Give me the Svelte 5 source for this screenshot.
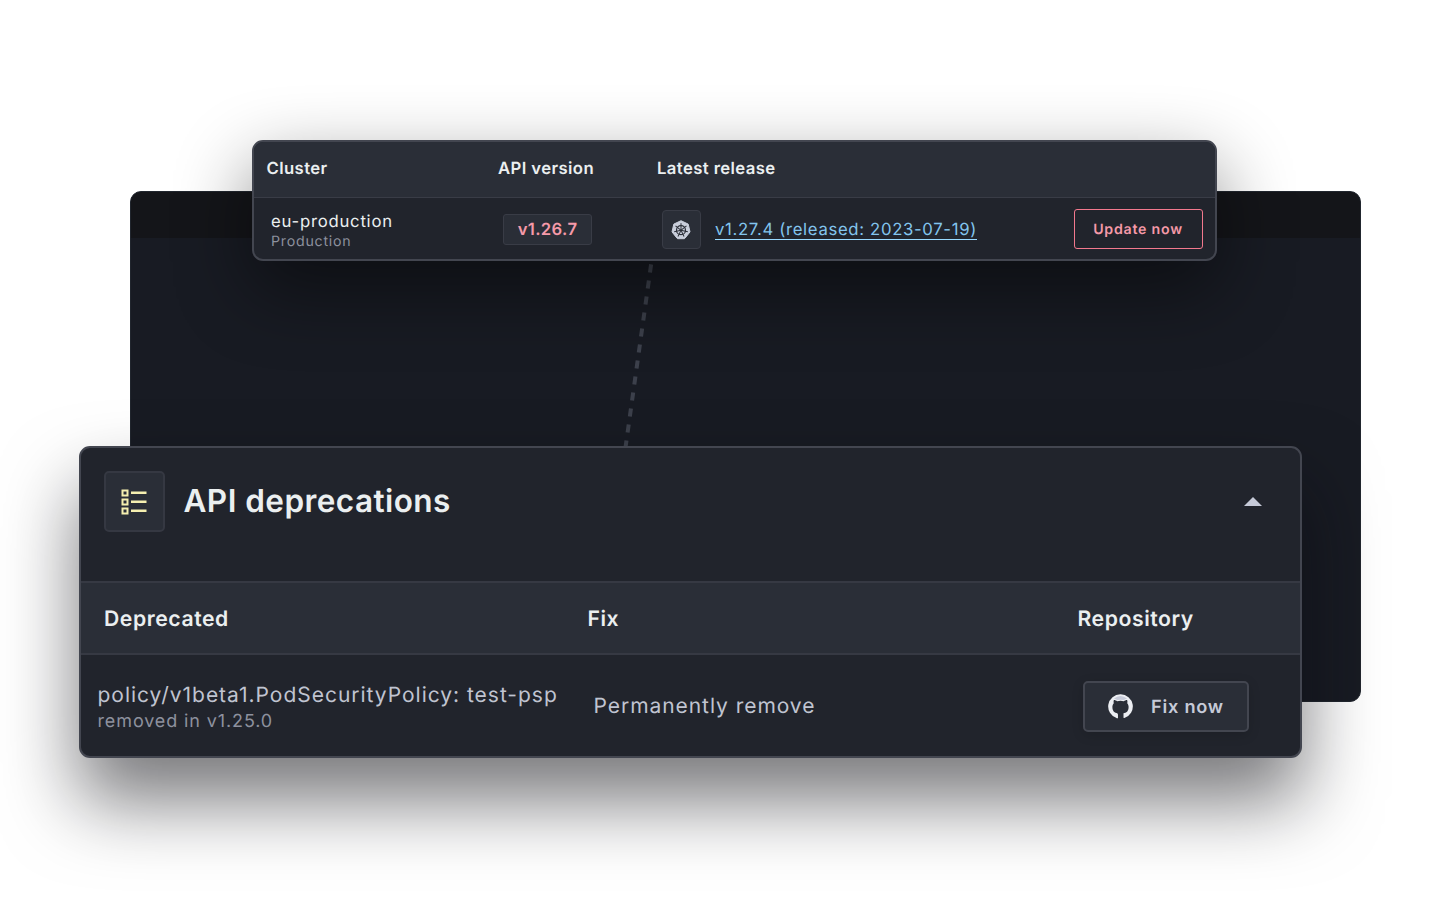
<script>
  const spokes = Array.from({ length: 7 }, (_, i) => (i * 360) / 7);
</script>

<main class="stage">
  <section class="backdrop"><div class="backdrop-bar"></div></section>

  <section class="panel release">
    <header class="release-head">
      <span class="c1">Cluster</span>
      <span class="c2">API version</span>
      <span class="c3">Latest release</span>
    </header>
    <div class="release-row">
      <div class="cluster">
        <span class="name">eu-production</span>
        <span class="env">Production</span>
      </div>
      <div class="version"><span>v1.26.7</span></div>
      <div class="k8s">
        <svg width="20" height="20" viewBox="0 0 20 20" aria-hidden="true">
          <path d="M10 .7 17.2 4.1 19 11.9 14 18.2Q13.600 18.700 13 18.700H7Q6.400 18.700 6 18.200L1 11.900 2.800 4.100Z" fill="#c9cedb" stroke="#c9cedb" stroke-linejoin="round" />
          <g fill="none" stroke="#2a2e37">
            <circle cx="10" cy="10.200" r="4.500" stroke-width="1.200" />
            {#each spokes as angle}
              <path d="M10 9.200V3.200" stroke-width="1" transform="rotate({angle} 10 10.200)" />
            {/each}
          </g>
          <circle cx="10" cy="10.200" r="1.200" fill="#2a2e37" />
        </svg>
      </div>
      <span class="link">v1.27.4 (released: 2023-07-19)</span>
      <button class="update"><span>Update now</span></button>
    </div>
  </section>

  <svg class="connector" width="60" height="200" viewBox="0 0 60 200" aria-hidden="true">
    <defs>
      <linearGradient id="fade" gradientUnits="userSpaceOnUse" x1="0" y1="0" x2="0" y2="90">
        <stop offset="0" stop-color="#282b32" />
        <stop offset="1" stop-color="#3c404b" />
      </linearGradient>
    </defs>
    <path d="M40.100 4.400 L14 191" fill="none" stroke="url(#fade)" stroke-width="4" stroke-dasharray="8.1 8.06" />
  </svg>

  <section class="panel deprecations">
    <header class="title-row">
      <div class="list-icon">
        <svg width="26" height="26" viewBox="0 0 26 26" fill="none" stroke="#f5efb0" stroke-width="2" aria-hidden="true">
          <path d="M1.500 1.500h5v5h-5zM1.500 10.500h5v5h-5zM1.500 19.500h5v5h-5z" />
          <path d="M10 3.700H25.500M10 12.700H25.500M10 21.700H25.500" stroke-width="2.400" />
        </svg>
      </div>
      <h1>API deprecations</h1>
      <svg class="caret" width="18" height="9" viewBox="0 0 18 9" aria-hidden="true"><path d="M0 9 9 0l9 9z" fill="#c6cad8" /></svg>
    </header>
    <div class="columns">
      <span class="d1">Deprecated</span>
      <span class="d2">Fix</span>
      <span class="d3">Repository</span>
    </div>
    <div class="dep-row">
      <div class="policy">
        <span class="resource">policy/v1beta1.PodSecurityPolicy: test-psp</span>
        <span class="removed">removed in v1.25.0</span>
      </div>
      <span class="remedy">Permanently remove</span>
      <button class="fix">
        <svg width="25" height="25" viewBox="0 0 25 25" aria-hidden="true">
          <path d="M9.300 24.300V20.800C6.300 21.300 5.500 19.600 4.700 18.500 4.200 17.800 3.500 17.600 3.100 17.200" fill="none" stroke="#eceef2" stroke-width="1.300" />
          <path fill="#eceef2" d="M12.500 .3A12.200 12.200 0 0 0 8.600 24.100q.9.100.9-.7V19.200C6.700 18.900 4.400 17.600 4.400 13.100 4.400 11.400 4.900 10.300 5.800 9.300 5.500 8.300 5.500 7 5.900 5.900 7.100 5.900 8.300 6.600 9.300 7.200Q12.500 6.500 15.700 7.200C16.700 6.600 17.900 5.900 19.100 5.900 19.500 7 19.500 8.300 19.200 9.300 20.100 10.300 20.600 11.400 20.600 13.100 20.600 17.600 18.300 18.900 15.500 19.200V23.400q0 .8.900.7A12.200 12.200 0 0 0 12.500.3Z" />
          <path d="M6 4.600Q12.500-.5 19 4.600L15.700 6Q12.500 5.300 9.300 6Z" fill="#c6cad8" />
        </svg>
        <span>Fix now</span>
      </button>
    </div>
  </section>
</main>

<style>
  :global(body) { margin: 0; background: #fff; }
  .stage {
    position: relative;
    width: 1440px;
    height: 900px;
    overflow: hidden;
    background: #fff;
    color: #ebeff0;
    font-family: Inter, sans-serif;
    text-rendering: geometricPrecision;
  }
  .stage * { box-sizing: border-box; }
  span, h1 { white-space: nowrap; }
  button { font-family: inherit; padding: 0; margin: 0; text-rendering: inherit; }
  .backdrop {
    position: absolute;
    left: 130px;
    top: 191px;
    width: 1231px;
    height: 511px;
    border: 1px solid #21262e;
    border-radius: 11px;
    background: #181b23;
    overflow: hidden;
  }
  .backdrop-bar { height: 46px; background: #141519; }
  .connector { position: absolute; left: 611px; top: 260px; }
  .panel {
    position: absolute;
    display: flex;
    flex-direction: column;
    background: #21242c;
    border: 2px solid #434650;
    border-radius: 11px;
  }
  .release {
    left: 252px;
    top: 140px;
    width: 965px;
    height: 121px;
    box-shadow: 0 28px 76px rgba(0, 0, 0, .48);
  }
  .release-head {
    display: flex;
    height: 56px;
    align-items: center;
    border-bottom: 1px solid #393c46;
    border-radius: 9px 9px 0 0;
    background: #2a2e37;
    font-size: 16.700px;
    line-height: 20px;
    font-weight: 600;
    letter-spacing: .4px;
    padding: 0 0 1px 12.500px;
  }
  .c1 { width: 231.500px; }
  .c2 { width: 159px; }
  .release-row { display: flex; flex: 1; align-items: center; padding: 1px 12.500px 0 17px; }
  .cluster { display: flex; flex-direction: column; width: 232px; padding-top: 4px; }
  .name { font-size: 16.700px; line-height: 22px; letter-spacing: .77px; }
  .env { font-size: 14.200px; line-height: 18px; letter-spacing: .76px; color: #8d919e; }
  .version {
    width: 89px;
    height: 31px;
    border: 1px solid #393c46;
    border-radius: 3px;
    background: #2a2e37;
    color: #f599a8;
    font-size: 16.700px;
    font-weight: 600;
    line-height: 30px;
    letter-spacing: .35px;
    text-align: center;
  }
  .k8s {
    display: flex;
    align-items: center;
    justify-content: center;
    margin-left: 70px;
    width: 39px;
    height: 39px;
    border: 1px solid #393c46;
    border-radius: 4px;
    background: #2a2e37;
  }
  .k8s svg { margin: 1px 1px 0 0; }
  .link {
    margin-left: 14px;
    height: 22px;
    border-bottom: 1px solid #99daff;
    color: #83c5ee;
    font-size: 16.700px;
    line-height: 25px;
    letter-spacing: .68px;
  }
  .update {
    margin-left: auto;
    width: 129px;
    height: 40px;
    border: 1px solid #f2788d;
    border-radius: 3px;
    background: transparent;
    color: #f599a8;
    font-size: 14.200px;
    font-weight: 600;
    letter-spacing: .75px;
    padding-top: 1px;
  }
  .deprecations {
    left: 79px;
    top: 446px;
    width: 1223px;
    height: 312px;
    box-shadow: 0 43px 76px rgba(10, 10, 14, .55);
  }
  .title-row { display: flex; height: 133px; padding: 23px 38px 0 22.500px; }
  .list-icon {
    display: flex;
    align-items: center;
    justify-content: center;
    width: 61.500px;
    height: 61px;
    border: 2px solid #353842;
    border-radius: 5px;
    background: #2a2e37;
  }
  h1 {
    margin: 0 0 0 18.500px;
    font-size: 31.500px;
    line-height: 60px;
    font-weight: 600;
    letter-spacing: .45px;
  }
  .caret { margin: 26px 0 0 auto; }
  .columns {
    display: flex;
    align-items: center;
    height: 74px;
    padding: 1px 0 0 23px;
    border-top: 2px solid #363943;
    border-bottom: 2px solid #363943;
    background: #2a2e37;
    font-size: 21.200px;
    font-weight: 600;
    letter-spacing: .56px;
  }
  .d1 { width: 483.500px; }
  .d2 { width: 490px; }
  .dep-row { display: flex; flex: 1; align-items: center; padding: 1px 51px 0 16.500px; color: #c0c4d1; }
  .policy { display: flex; flex-direction: column; width: 496px; padding-top: 3px; }
  .resource { font-size: 21px; line-height: 27px; letter-spacing: .98px; }
  .removed { font-size: 18px; line-height: 25px; letter-spacing: .88px; color: #8d919e; }
  .remedy { font-size: 21px; letter-spacing: .95px; }
  .fix {
    display: flex;
    align-items: center;
    margin-left: auto;
    width: 166px;
    height: 51px;
    padding-left: 23px;
    gap: 18px;
    border: 2px solid #434650;
    border-radius: 5px;
    background: #2a2e37;
    box-shadow: 0 3px 12px rgba(0, 0, 0, .15);
    color: #c6cad8;
    font-size: 18.200px;
    font-weight: 600;
    letter-spacing: .75px;
  }
  .fix span { padding-top: 1px; }
</style>
